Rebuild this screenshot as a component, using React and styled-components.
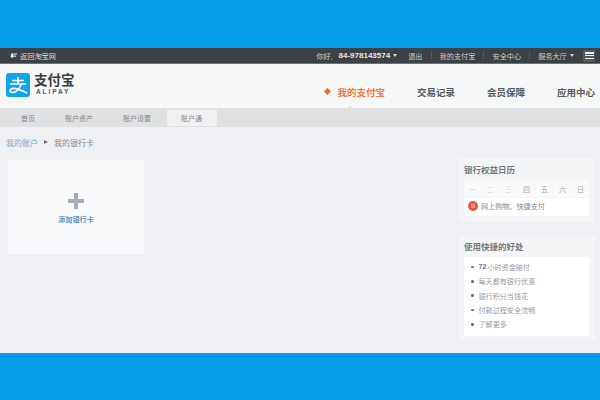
import React from "react";
import styled, { createGlobalStyle } from "styled-components";

const Global = createGlobalStyle`
  html, body { margin: 0; padding: 0; background: #029de6; }
  * { box-sizing: border-box; }
`;

const FONT = `"Liberation Sans", "Noto Sans CJK SC", sans-serif`;

const Page = styled.div`
  width: 600px;
  height: 400px;
  overflow: hidden;
  background: #029de6;
  padding-top: 48px;
  font-family: ${FONT};
`;

const Shot = styled.div`
  height: 305px;
  background: #eef0f3;
  display: flex;
  flex-direction: column;
`;

const TopBar = styled.div`
  height: 16px;
  flex: none;
  background: #3c4145;
  border-bottom: 1px solid #6a7074;
  color: #d8dadb;
  font-size: 7.2px;
  display: flex;
  align-items: center;
  justify-content: space-between;
  padding: 0 5px 0 10px;
`;

const BackLink = styled.div`
  display: flex;
  align-items: center;
  gap: 3px;
`;

const TopLinks = styled.div`
  display: flex;
  align-items: center;
`;

const TopLink = styled.span`
  margin-left: ${({ $gap }) => $gap || 0}px;
  font-size: ${({ $num }) => ($num ? "8px" : "7.2px")};
  font-weight: ${({ $num }) => ($num ? 700 : 400)};
  color: ${({ $num }) => ($num ? "#e4e6e7" : "#c9cccd")};
  white-space: nowrap;
`;

const Caret = styled.i`
  display: inline-block;
  margin-left: 3px;
  border: 2.5px solid transparent;
  border-top: 3px solid #d8dadb;
  border-bottom: 0;
  vertical-align: middle;
`;

const Divider = styled.span`
  width: 1px;
  height: 7px;
  background: #565b5f;
  margin-left: 8px;
`;

const MenuButton = styled.div`
  width: 12px;
  height: 12px;
  margin-left: 9px;
  background: #54595c;
  padding: 2.5px 1.5px;
  display: flex;
  flex-direction: column;
  justify-content: space-between;
  & > i { display: block; height: 1.5px; background: #eceded; }
`;

const Header = styled.div`
  height: 44px;
  flex: none;
  background: #f6f7f7;
  display: flex;
  align-items: center;
  justify-content: space-between;
  padding: 0 5px 0 6px;
`;

const Logo = styled.div`
  display: flex;
  align-items: center;
  gap: 4px;
  margin-top: -3px;
`;

const LogoText = styled.div`
  display: flex;
  flex-direction: column;
  color: #3b3d3f;
`;

const LogoCn = styled.div`
  font-size: 13.5px;
  font-weight: 700;
  line-height: 15px;
`;

const LogoEn = styled.div`
  font-size: 6.5px;
  font-weight: 700;
  line-height: 8px;
  letter-spacing: 1.9px;
  padding-left: 2px;
  color: #55585a;
`;

const MainNav = styled.div`
  display: flex;
  align-items: center;
  margin-top: 11px;
`;

const MainItem = styled.div`
  position: relative;
  font-size: 9.5px;
  font-weight: 700;
  white-space: nowrap;
  color: ${({ $active }) => ($active ? "#ee7b3b" : "#55585a")};
  margin-left: ${({ $gap }) => $gap || 0}px;
  display: flex;
  align-items: center;
  ${({ $active }) =>
    $active &&
    `&::after {
      content: "";
      position: absolute;
      left: 23px;
      bottom: -9px;
      border: 2px solid transparent;
      border-bottom: 2px solid #d5d8d8;
      border-top: 0;
    }`}
`;

const Diamond = styled.i`
  width: 5px;
  height: 5px;
  background: #e8702c;
  transform: rotate(45deg);
  margin-right: 7px;
`;

const SubNav = styled.div`
  height: 19px;
  flex: none;
  background: #dfe1e2;
  display: flex;
  padding-left: 21px;
`;

const SubItem = styled.div`
  height: 16px;
  margin-top: 2px;
  margin-left: ${({ $gap }) => $gap || 0}px;
  padding: 0 ${({ $active }) => ($active ? "15px 0 14px" : "0")};
  background: ${({ $active }) => ($active ? "#eff0f1" : "transparent")};
  color: #85898c;
  font-size: 7px;
  display: flex;
  align-items: center;
`;

const Body = styled.div`
  flex: 1;
  display: flex;
  justify-content: space-between;
  padding: 0 5px 0 7px;
`;

const LeftCol = styled.div`
  width: 138px;
`;

const Crumbs = styled.div`
  height: 32px;
  margin-left: -1px;
  padding-bottom: 2px;
  display: flex;
  align-items: center;
  font-size: 8px;
  color: #85898c;
`;

const CrumbLink = styled.span`
  color: #7ea6cb;
`;

const CrumbArrow = styled.i`
  margin: 0 6px 0 6px;
  border: 2.5px solid transparent;
  border-left: 4px solid #6a6e71;
  border-right: 0;
`;

const AddCard = styled.div`
  height: 96px;
  background: #f9fafc;
  border: 1px solid #eceef1;
  display: flex;
  flex-direction: column;
  align-items: center;
  justify-content: center;
  gap: 5px;
  padding-top: 3px;
`;

const Plus = styled.div`
  width: 16px;
  height: 16px;
  position: relative;
  &::before, &::after {
    content: "";
    position: absolute;
    background: #a6adb6;
  }
  &::before { left: 0; right: 0; top: 6px; height: 4px; }
  &::after { top: 0; bottom: 0; left: 6px; width: 4px; }
`;

const AddLabel = styled.div`
  font-size: 7.2px;
  font-weight: 700;
  color: #5e92c0;
`;

const RightCol = styled.div`
  width: 136px;
  padding-top: 31px;
  display: flex;
  flex-direction: column;
  gap: 13px;
`;

const Panel = styled.div`
  background: #f4f5f6;
  padding: 0 6px 6px 5px;
  height: ${({ $h }) => $h}px;
`;

const PanelTitle = styled.div`
  height: 22px;
  display: flex;
  align-items: center;
  font-size: 8.5px;
  font-weight: 700;
  color: #75797c;
`;

const Week = styled.div`
  display: grid;
  grid-template-columns: repeat(7, 1fr);
  gap: 1px;
  height: 17px;
`;

const Day = styled.div`
  background: #fafafb;
  color: ${({ $on }) => ($on ? "#a2a5a8" : "#d3d5d7")};
  font-size: 7px;
  display: flex;
  align-items: center;
  justify-content: center;
`;

const Promo = styled.div`
  margin-top: 1px;
  height: 18px;
  background: #fff;
  display: flex;
  align-items: center;
  gap: 3px;
  padding: 0 0 2px 4px;
  font-size: 7.1px;
  color: #85898c;
`;

const PromoIcon = styled.svg`
  width: 10px;
  height: 10px;
`;

const BenefitList = styled.ul`
  margin: 0;
  padding: 3px 0 0 7px;
  height: 79px;
  list-style: none;
  background: #fff;
`;

const Benefit = styled.li`
  height: 14.3px;
  display: flex;
  align-items: center;
  font-size: 7.1px;
  color: #999c9f;
  &::before {
    content: "";
    width: 2.5px;
    height: 2.5px;
    border-radius: 50%;
    background: #6f7376;
    margin-right: 5px;
  }
  & b { color: #6f7376; margin-right: 1px; }
`;

const days = ["一", "二", "三", "四", "五", "六", "日"];

export default function App() {
  return (
    <Page>
      <Global />
      <Shot>
        <TopBar>
          <BackLink>
            <svg width="7" height="6" viewBox="0 0 7 6">
              <path d="M7 1H1.5V3.2H6M3 1.8L1 3.2 3 4.8" fill="none" stroke="#e4e6e7" strokeWidth="1.2" />
            </svg>
            返回淘宝网
          </BackLink>
          <TopLinks>
            <TopLink>你好,</TopLink>
            <TopLink $num $gap={6}>84-978143574</TopLink>
            <Caret />
            <TopLink $gap={11}>退出</TopLink>
            <Divider />
            <TopLink $gap={8}>我的支付宝</TopLink>
            <Divider />
            <TopLink $gap={8}>安全中心</TopLink>
            <Divider />
            <TopLink $gap={8}>服务大厅</TopLink>
            <Caret />
            <MenuButton><i /><i /><i /></MenuButton>
          </TopLinks>
        </TopBar>

        <Header>
          <Logo>
            <svg width="24" height="24" viewBox="0 0 24 24">
              <rect width="24" height="24" rx="3" fill="#12a4e8" />
              <path
                d="M6 7.5H18M12 4V11M4 11H20M15.5 11C14 15 10.5 19.5 7 19.5C4.5 19.5 3.5 18 4.5 16.5C6 14.5 11 15 21 20"
                fill="none"
                stroke="#fff"
                strokeWidth="1.7"
              />
            </svg>
            <LogoText>
              <LogoCn>支付宝</LogoCn>
              <LogoEn>ALIPAY</LogoEn>
            </LogoText>
          </Logo>
          <MainNav>
            <MainItem $active><Diamond />我的支付宝</MainItem>
            <MainItem $gap={32}>交易记录</MainItem>
            <MainItem $gap={32}>会员保障</MainItem>
            <MainItem $gap={32}>应用中心</MainItem>
          </MainNav>
        </Header>

        <SubNav>
          <SubItem>首页</SubItem>
          <SubItem $gap={30}>账户资产</SubItem>
          <SubItem $gap={30}>账户设置</SubItem>
          <SubItem $gap={16} $active>账户通</SubItem>
        </SubNav>

        <Body>
          <LeftCol>
            <Crumbs>
              <CrumbLink>我的账户</CrumbLink>
              <CrumbArrow />
              我的银行卡
            </Crumbs>
            <AddCard>
              <Plus />
              <AddLabel>添加银行卡</AddLabel>
            </AddCard>
          </LeftCol>

          <RightCol>
            <Panel $h={64}>
              <PanelTitle>银行权益日历</PanelTitle>
              <Week>
                {days.map((d, i) => (
                  <Day key={d} $on={i > 2}>{d}</Day>
                ))}
              </Week>
              <Promo>
                <PromoIcon viewBox="0 0 10 10">
                  <circle cx="5" cy="5" r="5" fill="#df5a45" />
                  <path d="M3 4H7M3 6H7" stroke="#f6d5cf" strokeWidth="0.9" />
                </PromoIcon>
                网上购物、快捷支付
              </Promo>
            </Panel>
            <Panel $h={105}>
              <PanelTitle>使用快捷的好处</PanelTitle>
              <BenefitList>
                <Benefit><b>72</b>小时资金赔付</Benefit>
                <Benefit>每天都有银行优惠</Benefit>
                <Benefit>银行积分当钱花</Benefit>
                <Benefit>付款过程安全流畅</Benefit>
                <Benefit>了解更多</Benefit>
              </BenefitList>
            </Panel>
          </RightCol>
        </Body>
      </Shot>
    </Page>
  );
}
